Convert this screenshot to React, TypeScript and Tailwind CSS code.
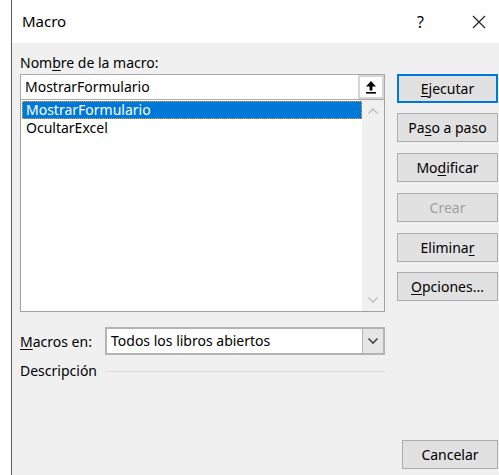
import React from "react";

const font = { fontFamily: '"Noto Sans", "Open Sans", Arial, sans-serif' };

function U({ children }: { children: React.ReactNode }) {
  return <span className="underline underline-offset-2">{children}</span>;
}

function Btn({
  children,
  className = "",
  primary = false,
  disabled = false,
}: {
  children: React.ReactNode;
  className?: string;
  primary?: boolean;
  disabled?: boolean;
}) {
  return (
    <div
      className={
        "h-[29px] flex items-center justify-center bg-[#e1e1e1] text-[14px] " +
        (primary ? "border-2 border-[#0078d7] " : "border border-[#adadad] ") +
        (disabled ? "text-[#a0a0a0] " : "text-black ") +
        className
      }
    >
      {children}
    </div>
  );
}

function ChevronUp({ color }: { color: string }) {
  return (
    <svg width="12" height="8" viewBox="0 0 12 8">
      <path d="M1.5 6.5 L6 2 L10.5 6.5" fill="none" stroke={color} strokeWidth="1.6" />
    </svg>
  );
}

function ChevronDown({ color }: { color: string }) {
  return (
    <svg width="12" height="8" viewBox="0 0 12 8">
      <path d="M1.5 1.5 L6 6 L10.5 1.5" fill="none" stroke={color} strokeWidth="1.6" />
    </svg>
  );
}

export default function App() {
  return (
    <div className="w-[499px] h-[475px] flex bg-white overflow-hidden" style={font}>
      {/* window edge */}
      <div className="w-[11px] bg-white" />
      <div className="w-px bg-[#5c5c5c]" />
      <div className="flex-1 flex flex-col">
        {/* title bar */}
        <div className="h-[43px] bg-white flex items-center pl-[10px] text-[15px] text-black">
          <span>Macro</span>
          <span className="ml-auto mr-[48px] text-[16px]">?</span>
          <svg width="14" height="14" viewBox="0 0 14 14" className="mr-[13px]">
            <path d="M1 1 L13 13 M13 1 L1 13" stroke="#222" strokeWidth="1.2" />
          </svg>
        </div>

        {/* body */}
        <div className="flex-1 bg-[#f0f0f0] flex pl-[8px] text-[14px] text-black">
          {/* left column */}
          <div className="w-[365px] flex flex-col">
            <div className="mt-[10px] h-[20px] leading-[20px]">
              Nom<U>b</U>re de la macro:
            </div>
            <div className="mt-[1px] h-[26px] flex bg-white border border-[#a9a9a9]">
              <div className="flex-1 pl-[4px] leading-[24px]">MostrarFormulario</div>
              <div className="w-[26px] bg-[#d6d6d6] flex items-center justify-center p-[2px]">
                <div className="w-full h-full bg-white flex items-center justify-center">
                  <svg width="12" height="14" viewBox="0 0 12 14">
                    <path d="M6 1 L11 6.5 L7.4 6.5 L7.4 10.5 L4.6 10.5 L4.6 6.5 L1 6.5 Z" fill="#000" />
                    <rect x="1" y="12" width="10" height="1.6" fill="#000" />
                  </svg>
                </div>
              </div>
            </div>
            <div className="h-[212px] flex bg-white border border-[#a0a0a0] border-t-0">
              <div className="flex-1 pt-[1px] pl-[1px] flex flex-col">
                <div className="h-[18px] bg-[#0078d7] text-white border border-dotted border-[#f0a030] pl-[3px] leading-[15px]">
                  MostrarFormulario
                </div>
                <div className="h-[18px] pl-[4px] leading-[18px]">OcultarExcel</div>
              </div>
              <div className="w-[22px] bg-[#f0f0f0] flex flex-col items-center justify-between py-[7px]">
                <ChevronUp color="#c2c2c2" />
                <ChevronDown color="#c2c2c2" />
              </div>
            </div>

            {/* location selector */}
            <div className="mt-[15px] flex items-center">
              <div className="w-[85px]">
                <U>M</U>acros en:
              </div>
              <div className="flex-1 h-[28px] flex bg-white border-2 border-[#b4b4b4]">
                <div className="flex-1 pl-[4px] leading-[24px]">Todos los libros abiertos</div>
                <div className="w-[21px] bg-[#e6e6e6] border-l border-[#b4b4b4] flex items-center justify-center">
                  <ChevronDown color="#444" />
                </div>
              </div>
            </div>

            <div className="mt-[5px] flex items-center">
              <span>Descripción</span>
              <div className="flex-1 h-px bg-[#dcdcdc] ml-[9px] mt-[1px]" />
            </div>
          </div>

          {/* right column */}
          <div className="ml-[12px] w-[101px] flex flex-col">
            <Btn primary className="mt-[31px]">
              <U>E</U>jecutar
            </Btn>
            <Btn className="mt-[10px]">
              Pa<U>s</U>o a paso
            </Btn>
            <Btn className="mt-[11px]">
              Mo<U>d</U>ificar
            </Btn>
            <Btn className="mt-[11px]" disabled>
              Crear
            </Btn>
            <Btn className="mt-[11px]">
              Elimina<U>r</U>
            </Btn>
            <Btn className="mt-[10px]">
              <U>O</U>pciones...
            </Btn>
            <Btn className="mt-auto mb-[6px] ml-[5px] w-[96px]">Cancelar</Btn>
          </div>
        </div>
      </div>
    </div>
  );
}
